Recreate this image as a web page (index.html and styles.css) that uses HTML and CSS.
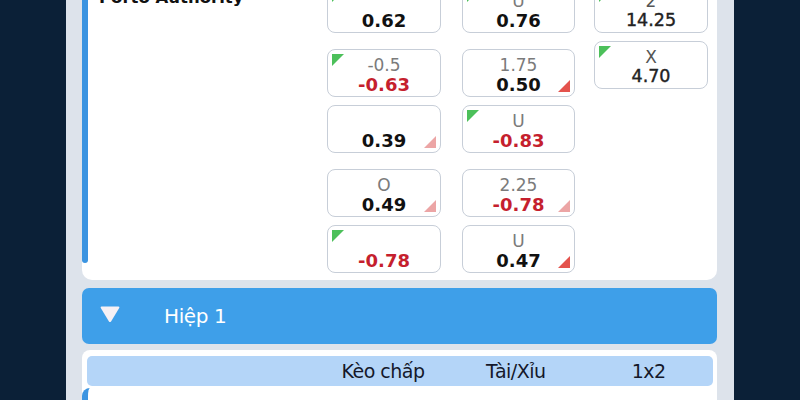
FILE: index.html
```html
<!DOCTYPE html>
<html lang="vi">
<head>
<meta charset="utf-8">
<title>Kèo</title>
<link rel="stylesheet" href="styles.css">
</head>
<body>
<div class="panel">
  <section class="card">
    <div class="match">
      <div class="teams">
        <div class="team">Pafos FC</div>
        <div class="team">Porto Authority</div>
      </div>
      <div class="col">
        <div class="pair">
          <div class="odd"><span class="lbl">0</span><span class="val">0.88</span></div>
          <div class="odd up"><span class="lbl"></span><span class="val">0.62</span></div>
        </div>
        <div class="pair">
          <div class="odd up"><span class="lbl">-0.5</span><span class="val neg">-0.63</span></div>
          <div class="odd down faint"><span class="lbl"></span><span class="val">0.39</span></div>
        </div>
        <div class="pair">
          <div class="odd down faint"><span class="lbl">O</span><span class="val">0.49</span></div>
          <div class="odd up"><span class="lbl"></span><span class="val neg">-0.78</span></div>
        </div>
      </div>
      <div class="col col-ou">
        <div class="pair">
          <div class="odd"><span class="lbl">2.5</span><span class="val">0.92</span></div>
          <div class="odd up"><span class="lbl">U</span><span class="val">0.76</span></div>
        </div>
        <div class="pair">
          <div class="odd down"><span class="lbl">1.75</span><span class="val">0.50</span></div>
          <div class="odd up"><span class="lbl">U</span><span class="val neg">-0.83</span></div>
        </div>
        <div class="pair">
          <div class="odd down faint"><span class="lbl">2.25</span><span class="val neg">-0.78</span></div>
          <div class="odd down"><span class="lbl">U</span><span class="val">0.47</span></div>
        </div>
      </div>
      <div class="col col-1x2">
        <div class="odd"><span class="lbl">1</span><span class="val">1.12</span></div>
        <div class="odd up"><span class="lbl">2</span><span class="val">14.25</span></div>
        <div class="odd up"><span class="lbl">X</span><span class="val">4.70</span></div>
      </div>
    </div>
  </section>

  <div class="half-bar">
    <svg class="caret" width="22" height="18" viewBox="0 0 22 18" aria-hidden="true">
      <path d="M2.5 1.5 H19.5 Q21 1.5 20.2 3 L12.2 16.2 Q11 18 9.8 16.2 L1.8 3 Q1 1.5 2.5 1.5 Z" fill="#f6f1f5"/>
    </svg>
    <span class="half-title">Hiệp 1</span>
  </div>

  <section class="card card2">
    <div class="thead">
      <span class="th-team"></span>
      <span class="th">Kèo chấp</span>
      <span class="th">Tài/Xỉu</span>
      <span class="th">1x2</span>
    </div>
    <div class="match2"></div>
  </section>
</div>
</body>
</html>
```

FILE: styles.css
```css
html, body {
  margin: 0;
  padding: 0;
}

body {
  background: #0b2037;
  height: 400px;
  overflow: hidden;
  font-family: "DejaVu Sans", "Liberation Sans", sans-serif;
}

.panel {
  width: 668px;
  margin: -79px 0 0 66px;
  box-sizing: border-box;
  padding: 0 17px 0 16px;
  background: #dde3eb;
  min-height: 520px;
}

.card {
  position: relative;
  background: #ffffff;
  border-radius: 0 0 10px 10px;
  padding: 8px 8px 7px 6px;
}

.card::before {
  content: "";
  position: absolute;
  left: 0;
  top: 0;
  bottom: 17px;
  width: 6px;
  background: #3b94e1;
  border-radius: 0 0 4px 4px;
}

.match {
  display: flex;
  gap: 20px;
}

.teams {
  width: 208px;
  padding: 26px 0 0 11px;
  display: flex;
  flex-direction: column;
  gap: 10px;
}

.team {
  font-size: 16.5px;
  font-weight: bold;
  line-height: 22px;
  color: #111;
  white-space: nowrap;
}

.col {
  width: 114px;
  display: flex;
  flex-direction: column;
  gap: 16px;
}

.col-ou {
  margin-left: 1px;
  width: 113px;
}

.col-1x2 {
  margin-left: -1px;
}

.pair {
  display: flex;
  flex-direction: column;
  gap: 8px;
}

.col-1x2 {
  gap: 8px;
}

.odd {
  position: relative;
  height: 48px;
  box-sizing: border-box;
  border: 1px solid #c7ced8;
  border-radius: 8px;
  background: #fff;
  padding-top: 6px;
  display: flex;
  flex-direction: column;
  align-items: center;
}

.lbl {
  height: 19px;
  line-height: 19px;
  font-size: 17px;
  color: #7b7b7b;
}

.val {
  line-height: 19px;
  font-size: 18px;
  font-weight: bold;
  color: #111;
}

.val.neg {
  color: #c51f2e;
}

.col-1x2 .lbl {
  color: #555;
}

.col-1x2 .val {
  font-weight: normal;
  font-size: 17.5px;
  color: #222;
  -webkit-text-stroke: 0.4px #222;
}

.up::before {
  content: "";
  position: absolute;
  left: 4px;
  top: 4px;
  width: 12px;
  height: 12px;
  background: #4cc05a;
  clip-path: polygon(0 0, 100% 0, 0 100%);
}

.down::after {
  content: "";
  position: absolute;
  right: 4px;
  bottom: 4px;
  width: 12px;
  height: 12px;
  background: #e4534d;
  clip-path: polygon(100% 0, 100% 100%, 0 100%);
}

.faint::after {
  background: #eca5a5;
}

.half-bar {
  margin-top: 8px;
  height: 56px;
  background: #3e9fe9;
  border-radius: 7px;
  display: flex;
  align-items: center;
  padding-left: 17px;
}

.caret {
  display: block;
  margin-top: -4px;
}

.half-title {
  margin-left: 43px;
  color: #fff;
  font-size: 20px;
  letter-spacing: -0.4px;
  line-height: 24px;
}

.card2 {
  margin-top: 6px;
  padding: 6px 0 0 0;
  border-radius: 8px 8px 0 0;
  min-height: 80px;
}

.card2::before {
  display: none;
}

.thead {
  margin: 0 4px 0 5px;
  height: 30px;
  background: #b4d5f8;
  border-radius: 5px;
  display: flex;
  align-items: center;
  gap: 20px;
  padding-right: 8px;
}

.th-team {
  width: 222px;
}

.th {
  width: 114px;
  text-align: center;
  font-size: 19px;
  letter-spacing: -0.5px;
  color: #15182a;
  white-space: nowrap;
}

.match2 {
  margin-top: 2px;
  height: 60px;
  border-left: 6px solid #3b94e1;
  border-top-left-radius: 8px;
  background: #fff;
}
```
